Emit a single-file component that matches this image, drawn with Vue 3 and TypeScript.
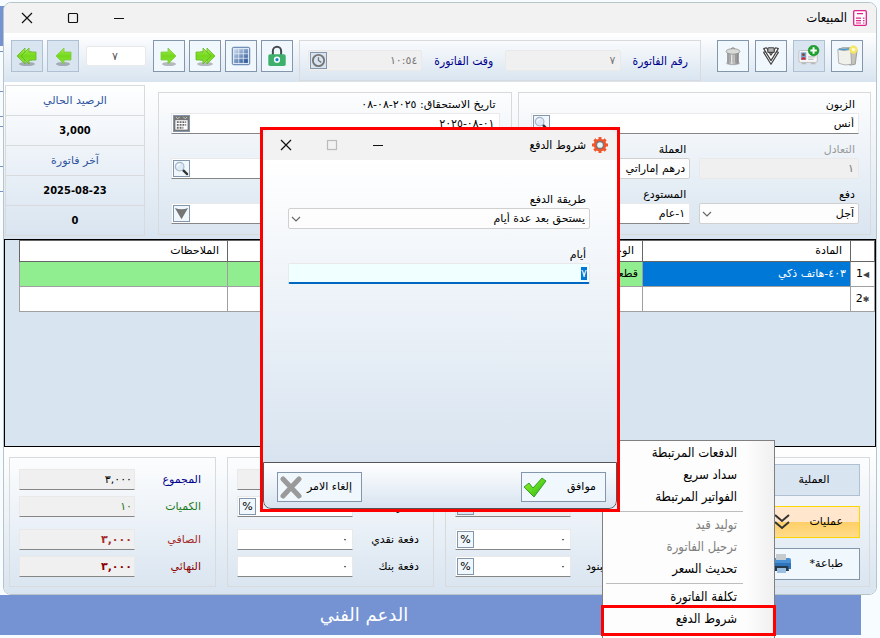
<script setup lang="ts">
import { onMounted, ref } from 'vue'

interface MenuEntry {
  label: string
  disabled?: boolean
  separated?: boolean
  marked?: boolean
}

const menu: MenuEntry[] = [
  { label: 'الدفعات المرتبطة' },
  { label: 'سداد سريع' },
  { label: 'الفواتير المرتبطة' },
  { label: 'توليد قيد', disabled: true, separated: true },
  { label: 'ترحيل الفاتورة', disabled: true },
  { label: 'تحديث السعر' },
  { label: 'تكلفة الفاتورة', separated: true },
  { label: 'شروط الدفع', marked: true },
]

const totals = [
  { id: 'sum', label: 'المجموع', value: '٣,٠٠٠', tone: 'navy' },
  { id: 'qty', label: 'الكميات', value: '١٠', tone: 'green' },
  { id: 'net', label: 'الصافي', value: '٣,٠٠٠', tone: 'brown' },
  { id: 'final', label: 'النهائي', value: '٣,٠٠٠', tone: 'maroon' },
]

const payments = [
  { id: 'extra', label: 'الإضافات', value: '٠', percent: false, off: true },
  { id: 'tax', label: 'الضريبة', value: '٠', percent: true, off: false },
  { id: 'cash', label: 'دفعة نقدي', value: '٠', percent: false, off: false },
  { id: 'bank', label: 'دفعة بنك', value: '٠', percent: false, off: false },
]

const discounts = [
  { id: 'd1', label: 'الحسم', value: '٠', percent: false, off: true },
  { id: 'd2', label: 'المواد', value: '٠', percent: true, off: true },
  { id: 'd3', label: 'الحسم', value: '٠', percent: true, off: false },
  { id: 'd4', label: 'حسم البنود', value: '٠', percent: true, off: false },
]

const days = ref('٧')
const daysBox = ref<HTMLInputElement | null>(null)

onMounted(() => {
  daysBox.value?.focus()
  daysBox.value?.select()
})
</script>

<template>
  <div class="page" dir="rtl">
    <svg class="defs" aria-hidden="true">
      <defs>
        <linearGradient id="lime" x1="0" y1="0" x2="0" y2="1">
          <stop offset="0" stop-color="#a4ec54" />
          <stop offset="0.5" stop-color="#74d81c" />
          <stop offset="1" stop-color="#8be23c" />
        </linearGradient>
        <linearGradient id="steel" x1="0" y1="0" x2="1" y2="1">
          <stop offset="0" stop-color="#d3dfef" />
          <stop offset="1" stop-color="#1f4d92" />
        </linearGradient>
        <linearGradient id="tin" x1="0" y1="0" x2="1" y2="0">
          <stop offset="0" stop-color="#888" />
          <stop offset="0.4" stop-color="#eee" />
          <stop offset="1" stop-color="#7b7b7b" />
        </linearGradient>
        <linearGradient id="tick" x1="0" y1="0" x2="1" y2="1">
          <stop offset="0" stop-color="#9af52a" />
          <stop offset="1" stop-color="#22b814" />
        </linearGradient>
        <symbol id="arrow" viewBox="0 0 22 22">
          <ellipse cx="11" cy="19" rx="7" ry="2" fill="#000" opacity="0.25" />
          <path d="M3 7h7V3l8 8-8 8v-4H3z" fill="url(#lime)" stroke="#7acb3a" stroke-width="0.800" />
        </symbol>
        <symbol id="arrows" viewBox="0 0 22 22">
          <ellipse cx="11" cy="19" rx="8" ry="2" fill="#000" opacity="0.25" />
          <path d="M6 7h7V3l8 8-8 8v-4H6z" fill="url(#lime)" stroke="#62b91d" stroke-width="0.800" />
          <path d="M2 7h7V3l8 8-8 8v-4H2z" fill="url(#lime)" stroke="#62b91d" stroke-width="0.800" />
        </symbol>
        <symbol id="lens" viewBox="0 0 16 16">
          <path d="M10 10l4 4" stroke="#333" stroke-width="2.400" stroke-linecap="round" />
          <circle cx="6" cy="6" r="4.600" fill="#dceaf8" stroke="#a9b5c5" stroke-width="1.200" />
          <path d="M3.500 6a3 3 0 0 1 3-2.500" fill="none" stroke="#fff" stroke-width="1.200" />
        </symbol>
        <symbol id="chev" viewBox="0 0 10 10">
          <path d="M1 3l4 4 4-4" fill="none" stroke="#666" stroke-width="1.100" />
        </symbol>
      </defs>
    </svg>

    <div class="behind" aria-hidden="true">
      <i class="strip"></i>
      <i v-for="n in 6" :key="n" class="rule"></i>
    </div>

    <main class="window">
      <header class="titlebar">
        <svg class="appicon" viewBox="0 0 14 16">
          <rect x="0.700" y="0.700" width="12.600" height="14.600" rx="1" fill="#fff" stroke="#e0218a" stroke-width="1.300" />
          <path d="M4 3.700h6M3 8.200h5M3 10.700h5M3 13h5M10 8.200h1.500M10 10.700h1.500M10 13h1.500" stroke="#e0218a" stroke-width="1.200" />
        </svg>
        <h1>المبيعات</h1>
        <div class="syscontrols">
          <button type="button" aria-label="تصغير"><svg viewBox="0 0 12 12"><path d="M1 6.500h10" /></svg></button>
          <button type="button" aria-label="تكبير"><svg viewBox="0 0 12 12"><rect x="1.500" y="1.500" width="9" height="9" rx="1" /></svg></button>
          <button type="button" aria-label="إغلاق"><svg viewBox="0 0 12 12"><path d="M1 1l10 10M11 1L1 11" /></svg></button>
        </div>
      </header>

      <div class="toolbar">
        <div class="tools">
          <button class="tool" type="button" aria-label="جديد">
            <svg viewBox="0 0 24 24">
              <path d="M3 5l4-2 13 0 3 3-2 15-6 1z" fill="#c4c4bb" stroke="#8b8b84" stroke-width="0.800" />
              <path d="M2 5q7 2 14 0l1 16q-7 2-14-1z" fill="#f1f1ec" stroke="#999" stroke-width="0.800" />
              <path d="M3 4q5 2 11 0" fill="none" stroke="#4b9bd0" stroke-width="1.600" />
              <circle cx="19" cy="5" r="4.500" fill="#f5e663" />
              <circle cx="19" cy="5" r="2" fill="#fffbd0" />
            </svg>
          </button>
          <button class="tool pale" type="button" aria-label="إضافة زبون">
            <svg viewBox="0 0 24 24">
              <rect x="1" y="6" width="20" height="13" rx="1.500" fill="#f7f7f7" stroke="#bdbdbd" />
              <rect x="3" y="8" width="6" height="8" fill="#7fa3d8" />
              <circle cx="6" cy="10.500" r="1.600" fill="#7c4a32" />
              <path d="M3.500 16c0-4 5-4 5 0z" fill="#c8312e" />
              <path d="M11 13h8M11 15.500h6" stroke="#aaa" />
              <path d="M4 20h5M14 20h5" stroke="#bbb" stroke-width="2" />
              <circle cx="17" cy="6" r="5.800" fill="#1ba32b" stroke="#0c7c1b" stroke-width="0.600" />
              <path d="M17 2.500v7M13.500 6h7" stroke="#fff" stroke-width="2.200" />
            </svg>
          </button>
          <button class="tool" type="button" aria-label="ترحيل">
            <svg viewBox="0 0 24 24" fill="#fff" stroke="#444" stroke-width="1.300" stroke-linejoin="round">
              <path d="M4 8l2-1 6 8 6-8 2 1-8 13z" />
              <path d="M4 4l3-1 5 8 5-8 3 1-8 13z" />
              <rect x="8.500" y="3" width="7" height="5" rx="1" fill="#b5b5b5" />
            </svg>
          </button>
          <button class="tool" type="button" aria-label="حذف">
            <svg viewBox="0 0 24 24">
              <ellipse cx="12" cy="20" rx="8" ry="2" fill="#000" opacity="0.15" />
              <path d="M6 8h12v12c-2 1.500-10 1.500-12 0z" fill="url(#tin)" stroke="#888" stroke-width="0.600" />
              <path d="M9 10v9M12 10v10M15 10v9" stroke="#888" stroke-width="0.800" />
              <ellipse cx="12" cy="7" rx="7.500" ry="3" fill="#dadad8" stroke="#8a8a8a" stroke-width="0.800" />
              <path d="M10 4.500c0-2 4-2 4 0" fill="none" stroke="#888" />
            </svg>
          </button>
        </div>

        <div class="ident">
          <label for="invno">رقم الفاتورة</label>
          <input id="invno" class="field flat" value="٧" readonly />
          <label for="invtime">وقت الفاتورة</label>
          <div class="field flat combo">
            <input id="invtime" value="١٠:٥٤" readonly />
            <button class="mini pale" type="button" aria-label="الوقت">
              <svg viewBox="0 0 16 16" fill="none" stroke="#777"><circle cx="8" cy="8" r="6" stroke-width="2" /><path d="M8 4.500V8l3 2" stroke-width="1.400" /></svg>
            </button>
          </div>
        </div>

        <div class="tools nav">
          <button class="tool" type="button" aria-label="قفل">
            <svg viewBox="0 0 24 24">
              <path d="M7.500 12V6.500a4.500 4.500 0 0 1 9 0V12" fill="none" stroke="#444b50" stroke-width="2.200" />
              <rect x="2.500" y="10" width="19" height="13" rx="2" fill="#3fb06b" />
              <circle cx="12" cy="16" r="2.600" fill="#1683c8" stroke="#fff" stroke-width="1.600" />
            </svg>
          </button>
          <button class="tool" type="button" aria-label="جدول">
            <svg viewBox="0 0 24 24">
              <rect x="2.500" y="2.500" width="19" height="19" rx="1.500" fill="#dde8f5" stroke="#456a9f" />
              <rect x="4.500" y="4.500" width="15" height="15" fill="url(#steel)" />
              <path d="M9.500 4.500v15M14.500 4.500v15M4.500 9.500h15M4.500 14.500h15" stroke="#eaf2fb" stroke-width="0.800" />
            </svg>
          </button>
          <button class="tool" type="button" aria-label="الأخير"><svg viewBox="0 0 22 22"><use href="#arrows" /></svg></button>
          <button class="tool" type="button" aria-label="التالي"><svg viewBox="0 0 22 22"><use href="#arrow" /></svg></button>
          <input class="field page-no" value="٧" aria-label="رقم السجل" />
          <button class="tool pale" type="button" aria-label="السابق"><svg class="flip" viewBox="0 0 22 22"><use href="#arrow" /></svg></button>
          <button class="tool pale" type="button" aria-label="الأول"><svg class="flip" viewBox="0 0 22 22"><use href="#arrows" /></svg></button>
        </div>
      </div>

      <section class="head">
        <div class="panel form">
          <div class="cell wide">
            <label for="client">الزبون</label>
            <div class="field line combo">
              <input id="client" value="أنس" />
              <button class="mini" type="button" aria-label="بحث"><svg viewBox="0 0 16 16"><use href="#lens" /></svg></button>
            </div>
          </div>
          <div class="cell">
            <label class="dim" for="rate">التعادل</label>
            <input id="rate" class="field flat" value="١" readonly />
          </div>
          <div class="cell">
            <label for="currency">العملة</label>
            <div class="pick">
              <select id="currency" class="field"><option>درهم إماراتي</option></select>
              <svg viewBox="0 0 10 10"><use href="#chev" /></svg>
            </div>
          </div>
          <div class="cell">
            <label for="pay">دفع</label>
            <div class="pick">
              <select id="pay" class="field"><option>آجل</option></select>
              <svg viewBox="0 0 10 10"><use href="#chev" /></svg>
            </div>
          </div>
          <div class="cell">
            <label for="store">المستودع</label>
            <input id="store" class="field line" value="١-عام" />
          </div>
        </div>

        <div class="panel form">
          <div class="cell wide">
            <label for="date">تاريخ الاستحقاق: ٢٠٢٥-٠٨-٠٨</label>
            <div class="field line combo">
              <input id="date" value="٠١-٠٨-٢٠٢٥" />
              <button class="mini" type="button" aria-label="التقويم">
                <svg viewBox="0 0 16 16">
                  <rect width="16" height="16" fill="#777" />
                  <path d="M2 1l2 2 2-2M10 1l2 2 2-2" stroke="#ccc" fill="none" />
                  <rect x="1.500" y="4.500" width="13" height="10" fill="#fff" />
                  <path d="M3 6.500h10M3 9.500h10M3 12.500h7" stroke="#666" stroke-width="2" stroke-dasharray="2 1" />
                </svg>
              </button>
            </div>
          </div>
          <div class="cell wide">
            <label for="account">الحساب</label>
            <div class="field line combo">
              <input id="account" value="" />
              <button class="mini" type="button" aria-label="بحث"><svg viewBox="0 0 16 16"><use href="#lens" /></svg></button>
            </div>
          </div>
          <div class="cell wide">
            <label for="note">البيان</label>
            <div class="field line combo">
              <input id="note" value="" />
              <button class="mini" type="button" aria-label="قائمة"><svg viewBox="0 0 16 16"><path d="M1 2q7 3 14 0L8 14z" fill="#757575" /></svg></button>
            </div>
          </div>
        </div>

        <dl class="stats">
          <dt>الرصيد الحالي</dt>
          <dd>3,000</dd>
          <dt>آخر فاتورة</dt>
          <dd>2025-08-23</dd>
          <dd>0</dd>
        </dl>
      </section>

      <section class="grid">
        <table>
          <colgroup>
            <col class="c-no" />
            <col class="c-item" />
            <col class="c-unit" />
            <col />
            <col class="c-note" />
          </colgroup>
          <thead>
            <tr><th></th><th>المادة</th><th>الوحدة</th><th></th><th>الملاحظات</th></tr>
          </thead>
          <tbody>
            <tr class="current">
              <th><span class="rowmark">◀</span>1</th>
              <td class="picked">٤٠٣-هاتف ذكي</td>
              <td class="unit">قطعة</td>
              <td></td>
              <td></td>
            </tr>
            <tr>
              <th><span class="rowmark">✱</span>2</th>
              <td></td><td></td><td></td><td></td>
            </tr>
          </tbody>
        </table>
      </section>

      <footer class="foot">
        <div class="panel actions">
          <button class="action pale" type="button"><span>العملية</span></button>
          <button class="action hot" type="button">
            <span>عمليات</span>
            <svg viewBox="0 0 20 20" fill="none" stroke="#333" stroke-width="2"><path d="M4 3l7 6 7-6M4 10l7 6 7-6" /></svg>
          </button>
          <button class="action" type="button">
            <span>طباعة*</span>
            <svg viewBox="0 0 20 20">
              <rect x="5" y="0" width="10" height="6" fill="#c6cbd0" />
              <path d="M1 6q0-2 2-2h2v2h10V4h3q2 0 2 2v9H1z" fill="#4a90d4" />
              <path d="M1 9h19v6H1z" fill="#2f74bb" />
              <path d="M4 12h13l1 5H3z" fill="#26384a" />
              <path d="M6 14h9v5H6z" fill="#9bbfe3" />
            </svg>
          </button>
        </div>

        <div class="panel sums">
          <div v-for="row in discounts" :key="row.id" class="row">
            <label :for="row.id">{{ row.label }}</label>
            <div class="field line combo" :class="{ off: row.off }">
              <input :id="row.id" :value="row.value" />
              <button v-if="row.percent" class="mini" :class="{ pale: row.off }" type="button">%</button>
            </div>
          </div>
        </div>

        <div class="panel sums">
          <div v-for="row in payments" :key="row.id" class="row">
            <label :for="row.id">{{ row.label }}</label>
            <div class="field line combo" :class="{ off: row.off }">
              <input :id="row.id" :value="row.value" />
              <button v-if="row.percent" class="mini" type="button">%</button>
            </div>
          </div>
        </div>

        <div class="panel sums">
          <div v-for="row in totals" :key="row.id" class="row total" :class="row.tone">
            <label :for="row.id">{{ row.label }}</label>
            <input :id="row.id" class="field line off" :value="row.value" readonly />
          </div>
        </div>
      </footer>
    </main>

    <div class="support"><a href="#support">الدعم الفني</a></div>

    <nav class="menu">
      <ul>
        <li v-for="entry in menu" :key="entry.label" :class="{ separated: entry.separated, marked: entry.marked }">
          <button type="button" :disabled="entry.disabled">{{ entry.label }}</button>
        </li>
      </ul>
    </nav>

    <div class="ring">
      <div class="dialog" role="dialog" aria-labelledby="terms-title">
        <header class="titlebar">
          <svg class="gear" viewBox="0 0 16 16">
            <g fill="#f0562b">
              <rect x="6.500" y="0" width="3" height="16" />
              <rect x="6.500" y="0" width="3" height="16" transform="rotate(45 8 8)" />
              <rect x="6.500" y="0" width="3" height="16" transform="rotate(90 8 8)" />
              <rect x="6.500" y="0" width="3" height="16" transform="rotate(135 8 8)" />
              <circle cx="8" cy="8" r="6.300" />
            </g>
            <circle cx="8" cy="8" r="3.400" fill="#eef3f5" stroke="#66757d" stroke-width="1.100" />
          </svg>
          <h2 id="terms-title">شروط الدفع</h2>
          <div class="syscontrols">
            <button type="button" aria-label="تصغير"><svg viewBox="0 0 12 12"><path d="M1 6.500h10" /></svg></button>
            <button type="button" aria-label="تكبير" disabled><svg viewBox="0 0 12 12"><rect x="1.500" y="1.500" width="9" height="9" /></svg></button>
            <button type="button" aria-label="إغلاق"><svg viewBox="0 0 12 12"><path d="M1 1l10 10M11 1L1 11" /></svg></button>
          </div>
        </header>
        <div class="body">
          <label for="method">طريقة الدفع</label>
          <div class="pick">
            <select id="method" class="field"><option>يستحق بعد عدة أيام</option></select>
            <svg viewBox="0 0 10 10"><use href="#chev" /></svg>
          </div>
          <label for="days">أيام</label>
          <input id="days" ref="daysBox" v-model="days" class="field active" />
        </div>
        <footer class="choices">
          <button class="choice" type="button">
            <span>موافق</span>
            <svg viewBox="0 0 24 24"><path d="M1 12l5-4 4 5 9-10 4 3-12 16z" fill="url(#tick)" stroke="#1d8a17" stroke-width="0.800" stroke-linejoin="round" /></svg>
          </button>
          <button class="choice" type="button">
            <span>إلغاء الامر</span>
            <svg viewBox="0 0 24 24"><path d="M4 4l16 17M20 4L4 21" stroke="#9a9a9a" stroke-width="5" stroke-linecap="round" /></svg>
          </button>
        </footer>
      </div>
    </div>
  </div>
</template>

<style>
body {
  background: #f6fcff;
}
</style>

<style scoped>
* {
  box-sizing: border-box;
}

.page {
  position: relative;
  min-height: 100vh;
  overflow: hidden;
  padding: 2px 3px 0 3px;
  background: #f6fcff;
  font: 11px/14px "DejaVu Sans", sans-serif;
  color: #000;
}

button,
input,
select {
  margin: 0;
  font: inherit;
  color: inherit;
}

button {
  padding: 0;
  border: 0;
  background: none;
}

h1,
h2,
ul,
dl,
dd {
  margin: 0;
  padding: 0;
}

.defs {
  position: absolute;
  width: 0;
  height: 0;
}

.behind {
  position: absolute;
  left: 0;
  top: 6px;
  display: grid;
  grid-template-rows: 40px 6px 40px 25px 10px 40px 25px;
  width: 8px;
}

.strip {
  background: #7593d3;
}

.rule {
  border-bottom: 1px solid #7593d3;
}

.window {
  position: relative;
  border: 1px solid #b9c4c6;
  border-radius: 8px;
  overflow: hidden;
  background: #fff;
}

.titlebar {
  display: flex;
  align-items: center;
  height: 30px;
  padding-right: 9px;
  gap: 6px;
  background: #f2f2f2;
}

.titlebar h1,
.titlebar h2 {
  flex: 1;
  font-family: "DejaVu Sans Condensed", "DejaVu Sans", sans-serif;
  font-size: 13px;
  font-weight: 400;
}

.dialog .titlebar h2 {
  font-size: 12px;
}

.appicon {
  width: 14px;
  height: 16px;
}

.gear {
  width: 16px;
  height: 16px;
}

.syscontrols {
  display: flex;
}

.syscontrols button {
  display: grid;
  place-items: center;
  width: 46px;
  height: 30px;
}

.syscontrols svg {
  width: 12px;
  height: 12px;
  fill: none;
  stroke: #111;
  stroke-width: 1.2;
}

.syscontrols button:disabled svg {
  stroke: #bbb;
}

.toolbar {
  display: flex;
  align-items: flex-start;
  height: 49px;
  padding: 7px 13px 0 7px;
  background: linear-gradient(#fff, #d8e4f0);
}

.tools {
  display: flex;
  gap: 6px;
}

.nav {
  gap: 4px;
  align-items: center;
}

.tool {
  display: grid;
  place-items: center;
  width: 32px;
  height: 32px;
  border: 1px solid #8496ab;
  background: #f0f7fd;
}

.tool svg {
  width: 22px;
  height: 22px;
}

.pale {
  background: #d8e4f0;
  border-color: #afc0d3;
}

.flip {
  transform: scaleX(-1);
}

.ident {
  display: flex;
  flex: 1;
  align-items: center;
  gap: 12px;
  height: 41px;
  margin: 0 16px 0 6px;
  padding: 0 12px 0 8px;
  border: 1px solid #d9dadc;
  color: #00008b;
}

.ident label {
  font-family: "DejaVu Sans Condensed", "DejaVu Sans", sans-serif;
  font-size: 12px;
}

.ident .field {
  flex: 1;
  color: #777;
}

.field {
  min-width: 0;
  width: 100%;
  height: 21px;
  padding: 0 4px 0 2px;
  border: 1px solid #e9e9e9;
  border-radius: 2px;
  background: #fff;
  outline: none;
}

.flat {
  background: #f0f0f0;
  color: #777;
}

.line {
  border-bottom-color: #868686;
  border-radius: 1px;
}

.off {
  background: #f0f0f0;
}

.page-no {
  width: 60px;
  height: 20px;
  margin: 0 3px;
  text-align: center;
  color: #555;
}

.combo {
  display: flex;
  align-items: center;
  padding: 0 4px 0 1px;
}

.combo input {
  flex: 1;
  min-width: 0;
  width: 0;
  height: 17px;
  padding: 0;
  border: 0;
  outline: 0;
  background: transparent;
}

.mini {
  display: grid;
  place-items: center;
  width: 17px;
  height: 17px;
  border: 1px solid #8496ab;
  background-color: #f0f7fd;
}

.mini.pale {
  background-color: #d8e4f0;
}

.mini svg {
  width: 15px;
  height: 15px;
}

.pick {
  display: grid;
  align-items: center;
}

.pick > * {
  grid-area: 1 / 1;
}

.pick select {
  appearance: none;
  border-color: #d0d0d0;
  background: #fdfdfd;
}

.pick svg {
  justify-self: end;
  width: 10px;
  height: 10px;
  margin-left: 3px;
  pointer-events: none;
}

.head {
  display: flex;
  gap: 6px;
  height: 157px;
  padding: 10px 5px 4px 1px;
  background: linear-gradient(#fff, #d8e4f0);
}

.panel {
  border: 1px solid #d9dadc;
}

.form {
  display: grid;
  flex: 1;
  grid-template-columns: 1fr 1fr;
  align-content: start;
  gap: 9px;
  padding: 5px 11px 0 12px;
}

.cell {
  min-width: 0;
}

.cell label {
  display: block;
  height: 15px;
  padding-right: 4px;
}

.wide {
  grid-column: 1 / -1;
}

.dim {
  color: #9a9a9a;
}

.stats {
  width: 140px;
  height: 151px;
  margin: -7px 7px 0 0;
  border: 1px solid #d9dadc;
  text-align: center;
  line-height: 29px;
}

.stats > * + * {
  border-top: 1px solid #d9dadc;
}

.stats dt {
  color: #2f55a0;
}

.stats dd {
  font-family: "DejaVu Sans Condensed", "DejaVu Sans", sans-serif;
  font-weight: 700;
}

.grid {
  height: 208px;
  border: 1px solid #000;
  background: #d8e4f0;
}

.grid table {
  width: calc(100% - 14px);
  table-layout: fixed;
  border-collapse: collapse;
}

.c-no {
  width: 24px;
}

.c-item,
.c-note {
  width: 208px;
}

.c-unit {
  width: 80px;
}

.grid th,
.grid td {
  height: 25px;
  padding: 0 4px;
  border: 1px solid #a0a0a0;
  background: #fff;
  font-weight: 400;
  text-align: right;
}

.grid thead th {
  height: 21px;
  padding: 0 8px;
  border-color: #666;
}

.grid tbody th {
  padding: 0 2px;
  text-align: center;
  white-space: nowrap;
}

.grid .current td {
  background: #90ee90;
}

.grid .current .picked {
  background: #0078d7;
  color: #fff;
}

.rowmark {
  font-size: 8px;
  color: #444;
}

.foot {
  display: grid;
  grid-template-columns: repeat(4, 1fr);
  gap: 11px;
  height: 147px;
  padding: 10px 6px 8px 5px;
  background: linear-gradient(#fff, #d8e4f0);
}

.sums {
  padding: 11px 14px 0 9px;
}

.row {
  display: flex;
  align-items: center;
  justify-content: space-between;
  margin-bottom: 6px;
}

.row:nth-child(2) {
  margin-bottom: 12px;
}

.row label {
  white-space: nowrap;
}

.row .field {
  flex: none;
  width: 116px;
  height: 21px;
}

.total .field {
  padding-right: 2px;
}

.navy label {
  color: #00008b;
}

.green {
  color: #1b7a1b;
}

.brown {
  color: #a52a2a;
}

.maroon {
  color: #8b0000;
}

.brown .field,
.maroon .field {
  font-weight: 700;
}

.actions {
  display: flex;
  flex-direction: column;
  align-items: flex-start;
  gap: 10px;
  padding: 6px 9px;
}

.action {
  display: flex;
  align-items: center;
  justify-content: space-between;
  width: 92px;
  height: 32px;
  padding: 0 16px 0 2px;
  border: 1px solid #8496ab;
  background: #f0f7fd;
}

.action.pale {
  justify-content: center;
  padding: 0;
  background: #d8e4f0;
  border-color: #afc0d3;
}

.action.hot {
  border: 1px solid #ffd500;
  background: linear-gradient(#ffe6cd 50%, #ffcf68 50%, #ffdb8a);
}

.action svg {
  width: 20px;
  height: 20px;
}

.support {
  display: grid;
  place-items: center;
  height: 40px;
  margin: 0 16px 0 -3px;
  padding-right: 133px;
  background: #7593d3;
}

.support a {
  color: #fff;
  font-size: 18px;
  text-decoration: none;
}

.menu {
  position: absolute;
  left: 602px;
  top: 440px;
  bottom: 0;
  width: 173px;
  border: 1px solid #808080;
  border-bottom: 0;
  background: linear-gradient(to left, #f0f0f0, #fdfdfd 28px);
}

.menu ul {
  display: flex;
  flex-direction: column;
  padding-top: 1px;
  list-style: none;
}

.menu button {
  width: 100%;
  height: 22px;
  padding-right: 37px;
  font-family: "DejaVu Sans Condensed", "DejaVu Sans", sans-serif;
  font-size: 13px;
  text-align: right;
}

.menu button:disabled {
  color: #808080;
}

.separated::before {
  content: "";
  display: block;
  height: 1px;
  margin: 3px 31px 2px 3px;
  background: #bdbdbd;
}

.marked {
  margin: -3px -2px 0 -2px;
  padding: 0 0 3px 0;
  border: 3px solid #f00;
}

.marked button {
  padding-right: 36px;
}

.ring {
  position: absolute;
  left: 260px;
  top: 127px;
  width: 360px;
  border: 3px solid #f00;
  background: #e4ecf5;
}

.dialog {
  border-radius: 8px;
  overflow: hidden;
}

.dialog .body {
  display: flex;
  flex-direction: column;
  height: 302px;
  padding: 33px 27px 0 25px;
  background: linear-gradient(#fff, #d8e4f0);
}

.body label {
  height: 15px;
  padding-right: 4px;
}

.body .pick {
  margin-bottom: 19px;
}

.body .active {
  border-bottom: 2px solid #0067c0;
  background: #f0ffff;
  padding-right: 2px;
}

.active::selection {
  background: #0078d7;
  color: #fff;
}

.choices {
  display: flex;
  justify-content: space-between;
  height: 47px;
  padding: 9px 10px 0 13px;
  border: 1px solid #555;
  border-radius: 0 0 8px 8px;
  background: linear-gradient(#fff, #d8e4f0);
}

.choice {
  display: flex;
  align-items: center;
  justify-content: space-between;
  width: 85px;
  height: 30px;
  padding: 0 9px 0 1px;
  border: 1px solid #8496ab;
  background: #f0f7fd;
}

.choice svg {
  width: 24px;
  height: 24px;
}
</style>
